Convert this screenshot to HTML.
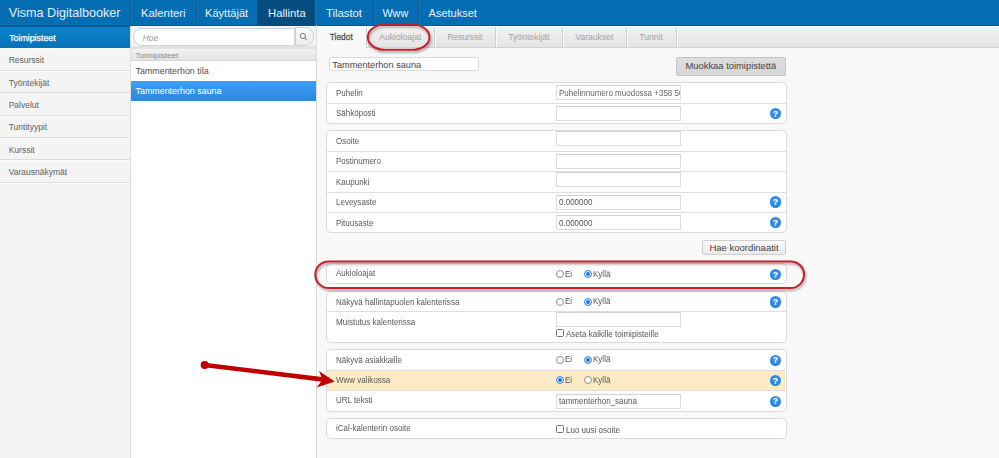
<!DOCTYPE html>
<html><head><meta charset="utf-8">
<style>
*{box-sizing:border-box;margin:0;padding:0}
html,body{width:999px;height:458px;overflow:hidden;background:#f8f8f8;font-family:"Liberation Sans",sans-serif;color:#555}
.a{position:absolute}
.t{position:absolute;white-space:nowrap;line-height:1}
/* header */
#hdr{left:0;top:0;width:999px;height:25.5px;background:#056db2;border-bottom:1.5px solid #055b9a}
.nav{position:absolute;top:0;height:24px;border-left:1px solid #0b5d9b;box-shadow:inset 1px 0 #1a72b4}
.nav span{position:absolute;top:8px;font-size:11.3px;color:#eaf2fa;line-height:1;white-space:nowrap}
/* sidebar */
#side{left:0;top:25.5px;width:131px;height:433px;background:#f4f4f4;border-right:1px solid #dedede}
.si{position:absolute;left:0;width:130px;height:22.4px;border-bottom:1px solid #dcdcdc;box-shadow:0 1px #fbfbfb}
.si span{position:absolute;left:8.7px;top:7.6px;font-size:8.5px;color:#606060;line-height:1;white-space:nowrap}
/* middle */
#mid{left:131px;top:25.5px;width:186px;height:433px;background:#fff;border-right:1px solid #dcdcdc}
/* right */
#tabs{left:317px;top:25.5px;width:682px;height:22.3px;background:linear-gradient(#f2f2f2,#e3e3e3);border-bottom:1px solid #d0d0d0;border-top:1px solid #fafafa}
.tab{position:absolute;top:0;height:20.8px;border-left:1px solid #cfcfcf;box-shadow:inset 1px 0 #fafafa}
.tab span{position:absolute;top:6.5px;font-size:8.6px;color:#a3a3a3;line-height:1;white-space:nowrap}
.pnl{position:absolute;left:326px;width:460.5px;background:#fff;border:1px solid #dadada;border-radius:5px}
.row{position:absolute;left:0;width:100%;border-top:1px solid #dedede}
.lbl{position:absolute;left:8.5px;font-size:9px;color:#585858;line-height:1;white-space:nowrap;transform:scaleX(.89);transform-origin:0 0;margin-top:-1.2px}
.inp{position:absolute;left:229px;width:124.5px;height:15px;background:#fff;border:1px solid #dcdcdc;border-top-color:#d2d2d2}
.inp{overflow:hidden}.inp span{position:absolute;left:1.5px;top:2.4px;font-size:9px;color:#555;line-height:1;white-space:nowrap;transform:scaleX(.89);transform-origin:0 0}
.help{position:absolute;left:442.7px;width:11.3px;height:11.3px;border-radius:50%;background:radial-gradient(circle at 50% 40%,#3d9af0,#2378d0);margin-top:-.2px}
.help:after{content:"?";position:absolute;left:0;top:1.8px;width:11.3px;text-align:center;font-size:8.6px;font-weight:bold;color:#fff;line-height:1}
.rad{position:absolute;width:8.2px;height:8.2px;margin-top:.2px;border-radius:50%;border:1px solid #8d8d8d;background:#fff}
.rad.on{border:1.3px solid #4a97f7;background:#1c6ef2;box-shadow:inset 0 0 0 1px #fff}
.rt{position:absolute;font-size:9px;color:#555;line-height:1;white-space:nowrap;transform:scaleX(.89);transform-origin:0 0;margin-top:-.5px}
.chk{position:absolute;width:8px;height:8px;border:1px solid #777;border-radius:1.5px;background:#fff}
</style></head><body>

<!-- HEADER -->
<div id="hdr" class="a">
  <span class="t" style="left:8.8px;top:7.3px;font-size:12.6px;color:#e6eef6">Visma Digitalbooker</span>
  <div class="nav" style="left:130px;width:66px"><span style="left:10px">Kalenteri</span></div>
  <div class="nav" style="left:196px;width:62px"><span style="left:8px;font-size:11.1px">Käyttäjät</span></div>
  <div class="nav" style="left:257px;width:58px;background:#054d7e;border-left:none;box-shadow:none;height:25.5px"><span style="left:11px">Hallinta</span></div>
  <div class="nav" style="left:315px;width:58px;border-left:none"><span style="left:11px">Tilastot</span></div>
  <div class="nav" style="left:373px;width:45px"><span style="left:8.4px;font-size:10.8px;top:8.3px">Www</span></div>
  <div class="nav" style="left:418px;width:70px"><span style="left:9.6px;font-size:11px">Asetukset</span></div>
</div>

<!-- SIDEBAR -->
<div id="side" class="a">
  <div class="si" style="top:0;height:22.8px;background:linear-gradient(#0a82c9,#0873b7);border-bottom:none;border-top:1px solid #0a5d9c"><span style="color:#fff;font-size:8.8px;top:7.3px;left:9.2px;-webkit-text-stroke:0.25px #fff">Toimipisteet</span></div>
  <div class="si" style="top:23.3px;height:22.3px"><span>Resurssit</span></div>
  <div class="si" style="top:45.6px;height:22.3px"><span>Työntekijät</span></div>
  <div class="si" style="top:67.9px;height:22.3px"><span>Palvelut</span></div>
  <div class="si" style="top:90.2px;height:22.3px"><span>Tuntityypit</span></div>
  <div class="si" style="top:112.5px;height:22.3px"><span>Kurssit</span></div>
  <div class="si" style="top:134.8px;height:22.3px"><span>Varausnäkymät</span></div>
</div>

<!-- MIDDLE -->
<div id="mid" class="a">
  <div class="a" style="left:0;top:0;width:185px;height:23px;background:#f3f3f3"></div>
  <div class="a" style="left:2.4px;top:2.3px;width:162px;height:18.4px;background:#fff;border:1px solid #d4d4d4;border-radius:9px 0 0 9px"></div>
  <span class="t" style="left:11.8px;top:8.8px;font-size:8.3px;font-style:italic;color:#999">Hoe</span>
  <div class="a" style="left:163.6px;top:1.6px;width:19px;height:19px;background:linear-gradient(#fafafa,#ececec);border:1px solid #d0d0d0;border-radius:0 9px 9px 0"></div>
  <svg class="a" style="left:167.7px;top:6.5px" width="9" height="9" viewBox="0 0 9 9"><circle cx="3.9" cy="3.9" r="2.6" fill="none" stroke="#7a7a7a" stroke-width="1"/><line x1="5.8" y1="5.8" x2="7.6" y2="7.6" stroke="#7a7a7a" stroke-width="1.2"/></svg>
  <div class="a" style="left:0;top:20.8px;width:185px;height:3px;background:#e2e2e2"></div>
  <div class="a" style="left:0;top:23.8px;width:185px;height:11.8px;background:linear-gradient(#f3f3f3,#e4e4e4);border-bottom:1px solid #d6d6d6"></div>
  <span class="t" style="left:4.6px;top:26px;font-size:8.1px;color:#8a8a8a">Toimipisteet</span>
  <span class="t" style="left:4.6px;top:41.3px;font-size:8.9px;color:#505050">Tammenterhon tila</span>
  <div class="a" style="left:0;top:55.6px;width:185px;height:20.1px;background:linear-gradient(#3e9ef6,#2f88dc)"></div>
  <span class="t" style="left:4.6px;top:61.1px;font-size:8.9px;color:#fff">Tammenterhon sauna</span>
</div>

<!-- RIGHT -->
<div class="a" style="left:316px;top:25px;width:1px;height:433px;background:#dadada"></div>
<div id="tabs" class="a">
  <div class="a" style="left:0;top:0;width:49px;height:23px;background:#f8f8f8"></div>
  <span class="t" style="left:12.8px;top:6.6px;font-size:8.4px;-webkit-text-stroke:0.3px #555;color:#555">Tiedot</span>
  <div class="tab" style="left:48.5px;width:68.5px"><span style="left:12.8px">Aukioloajat</span></div>
  <div class="tab" style="left:117px;width:61px"><span style="left:12.5px;font-size:8.4px">Resurssit</span></div>
  <div class="tab" style="left:177.8px;width:66.5px"><span style="left:12.5px">Työntekijät</span></div>
  <div class="tab" style="left:245px;width:64px"><span style="left:12.3px">Varaukset</span></div>
  <div class="tab" style="left:309px;width:50px"><span style="left:12.3px">Tunnit</span></div>
  <div class="tab" style="left:358.7px;width:2px"></div>
</div>

<div class="a" style="left:329.4px;top:57.1px;width:149.2px;height:13.7px;background:#fff;border:1px solid #dcdcdc;border-radius:1px"></div>
<span class="t" style="left:332.3px;top:60.6px;font-size:9.2px;color:#444">Tammenterhon sauna</span>

<div class="a" style="left:676.1px;top:57.3px;width:110.2px;height:18.6px;background:linear-gradient(#dedede,#d6d6d6);border:1px solid #c4c4c4;border-radius:2px"></div>
<span class="t" style="left:685.5px;top:61.4px;font-size:9.4px;color:#444">Muokkaa toimipistettä</span>

<!-- Panel 1 -->
<div class="pnl" style="top:81.9px;height:41.8px">
  <span class="lbl" style="top:7px">Puhelin</span>
  <div class="inp" style="top:2.6px"><span style="color:#666">Puhelinnumero muodossa +358 50</span></div>
  <div class="row" style="top:19.8px"></div>
  <span class="lbl" style="top:27.3px">Sähköposti</span>
  <div class="inp" style="top:23.3px"></div>
  <div class="help" style="top:25.3px"></div>
</div>

<!-- Panel 2 -->
<div class="pnl" style="top:130.1px;height:103px">
  <span class="lbl" style="top:7px">Osoite</span>
  <div class="inp" style="top:-0.6px"></div>
  <div class="row" style="top:19.5px"></div>
  <span class="lbl" style="top:27.5px">Postinumero</span>
  <div class="inp" style="top:22.8px"></div>
  <div class="row" style="top:40px"></div>
  <span class="lbl" style="top:48px">Kaupunki</span>
  <div class="inp" style="top:40.9px"></div>
  <div class="row" style="top:60.5px"></div>
  <span class="lbl" style="top:68.5px">Leveysaste</span>
  <div class="inp" style="top:63.8px"><span>0.000000</span></div>
  <div class="help" style="top:65.5px"></div>
  <div class="row" style="top:81px"></div>
  <span class="lbl" style="top:89px">Pituusaste</span>
  <div class="inp" style="top:84.3px"><span>0.000000</span></div>
  <div class="help" style="top:86px"></div>
</div>

<div class="a" style="left:701.5px;top:239.5px;width:84.8px;height:15.3px;background:linear-gradient(#fbfbfb,#e9e9e9);border:1px solid #cfcfcf;border-radius:2px"></div>
<span class="t" style="left:709.4px;top:243px;font-size:9.5px;color:#444">Hae koordinaatit</span>

<!-- Panel 3 -->
<div class="pnl" style="top:263.3px;height:20.3px">
  <span class="lbl" style="top:6px">Aukioloajat</span>
  <div class="rad" style="left:228.7px;top:5.5px"></div><span class="rt" style="left:238.2px;top:6px">Ei</span>
  <div class="rad on" style="left:256.6px;top:5.5px"></div><span class="rt" style="left:266px;top:6px">Kyllä</span>
  <div class="help" style="top:4.6px"></div>
</div>

<!-- Panel 4 -->
<div class="pnl" style="top:291.2px;height:52.2px">
  <span class="lbl" style="top:6.5px">Näkyvä hallintapuolen kalenterissa</span>
  <div class="rad" style="left:228.7px;top:5.2px"></div><span class="rt" style="left:238.2px;top:5.7px">Ei</span>
  <div class="rad on" style="left:256.6px;top:5.2px"></div><span class="rt" style="left:266px;top:5.7px">Kyllä</span>
  <div class="help" style="top:4.3px"></div>
  <div class="row" style="top:18.8px"></div>
  <span class="lbl" style="top:26.8px">Muistutus kalenterissa</span>
  <div class="inp" style="top:19.6px;height:15.2px"></div>
  <div class="chk" style="left:228.8px;top:37.2px"></div>
  <span class="rt" style="left:239px;top:38.1px">Aseta kaikille toimipisteille</span>
</div>

<!-- Panel 5 -->
<div class="pnl" style="top:349.2px;height:62.8px">
  <span class="lbl" style="top:6.5px">Näkyvä asiakkaille</span>
  <div class="rad" style="left:228.7px;top:5.3px"></div><span class="rt" style="left:238.2px;top:5.8px">Ei</span>
  <div class="rad on" style="left:256.6px;top:5.3px"></div><span class="rt" style="left:266px;top:5.8px">Kyllä</span>
  <div class="help" style="top:4.5px"></div>
  <div class="a" style="left:0;top:20px;width:458px;height:21px;background:#fcebc5;border-top:1px solid #dedede;border-bottom:1px solid #dedede"></div>
  <span class="lbl" style="top:26.5px">Www valikossa</span>
  <div class="rad on" style="left:228.7px;top:25.5px"></div><span class="rt" style="left:238.2px;top:26px">Ei</span>
  <div class="rad" style="left:256.6px;top:25.5px"></div><span class="rt" style="left:266px;top:26px">Kyllä</span>
  <div class="help" style="top:25px"></div>
  <span class="lbl" style="top:47px">URL teksti</span>
  <div class="inp" style="top:43.5px"><span>tammenterhon_sauna</span></div>
  <div class="help" style="top:45.5px"></div>
</div>

<!-- Panel 6 -->
<div class="pnl" style="top:418px;height:20.6px">
  <span class="lbl" style="top:6px">iCal-kalenterin osoite</span>
  <div class="chk" style="left:228.8px;top:6px"></div>
  <span class="rt" style="left:239px;top:7.3px">Luo uusi osoite</span>
</div>

<!-- ANNOTATIONS -->
<svg class="a" style="left:0;top:0" width="999" height="458" viewBox="0 0 999 458">
  <defs>
    <filter id="sh" x="-10%" y="-30%" width="120%" height="160%"><feDropShadow dx="1" dy="2" stdDeviation="1.2" flood-color="#000" flood-opacity="0.35"/></filter>
  </defs>
  <rect x="367.8" y="24.6" width="61.7" height="25.2" rx="17" ry="12.6" fill="none" stroke="#c4202c" stroke-width="2" filter="url(#sh)"/>
  <rect x="315.3" y="261.4" width="488.7" height="26.6" rx="13.3" ry="13.3" fill="none" stroke="#c4202c" stroke-width="2" filter="url(#sh)"/>
  <g fill="#c00000">
    <circle cx="204.7" cy="364.9" r="4"/>
    <line x1="204.7" y1="365" x2="324" y2="379.6" stroke="#c00000" stroke-width="4.6"/>
    <polygon points="319,371 334.7,381.4 316.8,387.5 322.5,379.6"/>
  </g>
</svg>

</body></html>
